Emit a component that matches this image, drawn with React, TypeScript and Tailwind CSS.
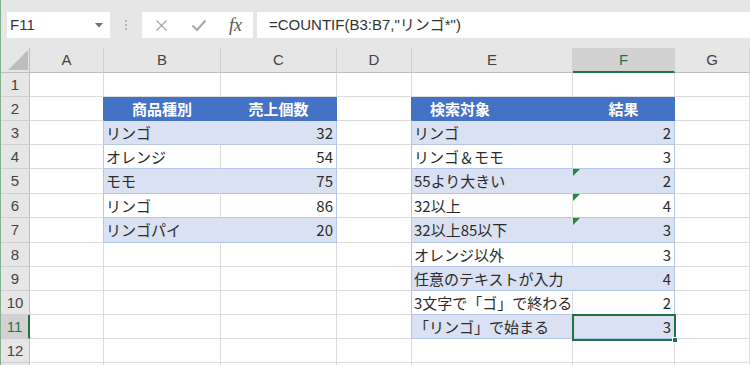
import React from 'react';

type CellData = { t: string; align?: 'l' | 'r' | 'c'; indent?: boolean; tri?: boolean; sel?: boolean };

const COLS = ['A', 'B', 'C', 'D', 'E', 'F', 'G'];

const data: Record<string, CellData> = {
  '2-2': { t: '商品種別', align: 'c' },
  '2-3': { t: '売上個数', align: 'c' },
  '2-5': { t: '検索対象', align: 'l', indent: true },
  '2-6': { t: '結果', align: 'c' },
  '3-2': { t: 'リンゴ' },
  '3-3': { t: '32', align: 'r' },
  '3-5': { t: 'リンゴ' },
  '3-6': { t: '2', align: 'r' },
  '4-2': { t: 'オレンジ' },
  '4-3': { t: '54', align: 'r' },
  '4-5': { t: 'リンゴ＆モモ' },
  '4-6': { t: '3', align: 'r' },
  '5-2': { t: 'モモ' },
  '5-3': { t: '75', align: 'r' },
  '5-5': { t: '55より大きい' },
  '5-6': { t: '2', align: 'r', tri: true },
  '6-2': { t: 'リンゴ' },
  '6-3': { t: '86', align: 'r' },
  '6-5': { t: '32以上' },
  '6-6': { t: '4', align: 'r', tri: true },
  '7-2': { t: 'リンゴパイ' },
  '7-3': { t: '20', align: 'r' },
  '7-5': { t: '32以上85以下' },
  '7-6': { t: '3', align: 'r', tri: true },
  '8-5': { t: 'オレンジ以外' },
  '8-6': { t: '3', align: 'r' },
  '9-5': { t: '任意のテキストが入力' },
  '9-6': { t: '4', align: 'r' },
  '10-5': { t: '3文字で「ゴ」で終わる' },
  '10-6': { t: '2', align: 'r' },
  '11-5': { t: '「リンゴ」で始まる' },
  '11-6': { t: '3', align: 'r', sel: true },
};

function Cell({ r, c }: { r: number; c: number }) {
  const t1 = (c === 2 || c === 3) && r >= 2 && r <= 7;
  const t2 = (c === 5 || c === 6) && r >= 2 && r <= 11;
  const inT = t1 || t2;
  const head = inT && r === 2;
  const band = inT && r % 2 === 1;
  const leftCol = (t1 && c === 2) || (t2 && c === 5);
  const leftOfT1 = c === 1 && r >= 2 && r <= 7;
  const leftOfT2 = c === 4 && r >= 2 && r <= 11;

  const bg = head ? 'bg-[#4472c4]' : band ? 'bg-[#d9e1f2]' : 'bg-white';
  const bb = head ? 'border-b-[#4472c4]' : inT ? 'border-b-[#b4c6e7]' : 'border-b-[#dcdcdc]';
  let br = 'border-r-[#dcdcdc]';
  if (head) br = 'border-r-[#4472c4]';
  else if (inT) br = leftCol ? (band ? 'border-r-[#d9e1f2]' : 'border-r-[#dcdcdc]') : 'border-r-[#b4c6e7]';
  else if ((leftOfT1 || leftOfT2) && r === 2) br = 'border-r-[#4472c4]';
  else if (leftOfT1 || leftOfT2) br = 'border-r-[#b4c6e7]';

  const d = data[`${r}-${c}`];
  const align = d?.align === 'r' ? 'text-right pr-[3px]' : d?.align === 'c' ? 'text-center' : d?.indent ? 'text-left pl-[18px]' : 'text-left pl-[2px]';
  const txt = head ? 'text-white font-bold' : 'text-[#2b2b2b]';

  return (
    <div className={`relative flex items-center border-r border-b ${bg} ${bb} ${br}`}>
      {d && (
        <span className={`block w-full overflow-hidden whitespace-nowrap leading-[22px] text-[15px] ${align} ${txt}`}>{d.t}</span>
      )}
      {d?.tri && (
        <svg className="absolute left-0 top-0" width="7" height="7" viewBox="0 0 7 7">
          <polygon points="0,0 7,0 0,7" fill="#1f8a3b" />
        </svg>
      )}
      {d?.sel && (
        <div className="absolute z-10 -left-[1px] -top-[1px] w-[104px] h-[27px] border-2 border-[#217346]">
          <div className="absolute -right-[4px] -bottom-[4px] w-[6px] h-[6px] bg-[#217346] border border-white" />
        </div>
      )}
    </div>
  );
}

function FormulaBar() {
  return (
    <div className="flex h-[48px] shrink-0 pt-[12px] pb-[10px] bg-[#e6e6e6] font-['Liberation_Sans','Noto_Sans_CJK_JP',sans-serif] text-[15px]">
      <div className="ml-[6px] w-[103px] bg-white flex items-center justify-between pl-[3px] pr-[7px]">
        <span className="text-[#333] leading-[20px]">F11</span>
        <svg width="8" height="5" viewBox="0 0 8 5">
          <polygon points="0,0 8,0 4,4.5" fill="#707070" />
        </svg>
      </div>
      <div className="w-[32px] flex flex-col items-center justify-center gap-[2px]">
        <div className="w-[2px] h-[2px] bg-[#b5b5b5]" />
        <div className="w-[2px] h-[2px] bg-[#b5b5b5]" />
        <div className="w-[2px] h-[2px] bg-[#b5b5b5]" />
      </div>
      <div className="w-[111px] bg-white flex items-center">
        <div className="w-[38px] flex items-center justify-center">
          <svg width="13" height="13" viewBox="0 0 13 13">
            <path d="M1.5 1.5 L11.5 11.5 M11.5 1.5 L1.5 11.5" stroke="#a8a8a8" strokeWidth="1.3" fill="none" />
          </svg>
        </div>
        <div className="w-[38px] flex items-center justify-center">
          <svg width="16" height="13" viewBox="0 0 16 13">
            <path d="M1.5 6.5 L6 11 L14.5 1.5" stroke="#a8a8a8" strokeWidth="2" fill="none" />
          </svg>
        </div>
        <div className="w-[35px] flex items-center justify-center">
          <span className="font-['Liberation_Serif',serif] italic text-[18px] text-[#555] leading-[20px]">fx</span>
        </div>
      </div>
      <div className="ml-[4px] flex-1 bg-white flex items-center pl-[12px]">
        <span className="text-[#333] leading-[20px] whitespace-nowrap">=COUNTIF(B3:B7,"リンゴ*")</span>
      </div>
    </div>
  );
}

export default function App() {
  const rows = Array.from({ length: 13 }, (_, i) => i + 1);
  return (
    <div className="w-[750px] h-[365px] overflow-hidden flex bg-[#e6e6e6]">
      <div className="w-[1px] shrink-0 bg-[#7fb28f]" />
      <div className="w-[749px] flex flex-col">
        <FormulaBar />
        <div className="grid grid-cols-[29px_74px_117px_116px_75px_161px_102px_75px] grid-rows-[25px_24px_24px_24px_24px_25px_24px_25px_24px_24px_24px_24px_24px_24px] bg-white font-['Noto_Sans_CJK_JP',sans-serif]">
          <div className="relative border-r border-b border-r-[#bfbfbf] border-b-[#bfbfbf] bg-[#e6e6e6]">
            <svg className="absolute left-[7px] top-[2px]" width="20" height="20" viewBox="0 0 20 20">
              <polygon points="20,0 20,20 0,20" fill="#bdbdbd" />
            </svg>
          </div>
          {COLS.map((l) =>
            l === 'F' ? (
              <div key={l} className="flex items-center justify-center border-r border-r-[#d0d0d0] border-b-2 border-b-[#217346] bg-[#d2d2d2] text-[#217346] text-[15px] font-['Liberation_Sans',sans-serif] leading-[20px]">
                {l}
              </div>
            ) : (
              <div key={l} className="flex items-center justify-center border-r border-r-[#d0d0d0] border-b border-b-[#bfbfbf] bg-[#e6e6e6] text-[#444] text-[15px] font-['Liberation_Sans',sans-serif] leading-[20px]">
                {l}
              </div>
            )
          )}
          {rows.map((r) => (
            <React.Fragment key={r}>
              {r === 11 ? (
                <div className="flex items-center justify-center border-b border-b-[#d0d0d0] border-r-2 border-r-[#217346] bg-[#d2d2d2] text-[#217346] text-[15px] font-['Liberation_Sans',sans-serif] leading-[20px]">
                  {r}
                </div>
              ) : (
                <div className="flex items-center justify-center border-b border-b-[#d0d0d0] border-r border-r-[#bfbfbf] bg-[#e6e6e6] text-[#444] text-[15px] font-['Liberation_Sans',sans-serif] leading-[20px]">
                  {r <= 12 ? r : ''}
                </div>
              )}
              {COLS.map((_, ci) => (
                <Cell key={ci} r={r} c={ci + 1} />
              ))}
            </React.Fragment>
          ))}
        </div>
      </div>
    </div>
  );
}
